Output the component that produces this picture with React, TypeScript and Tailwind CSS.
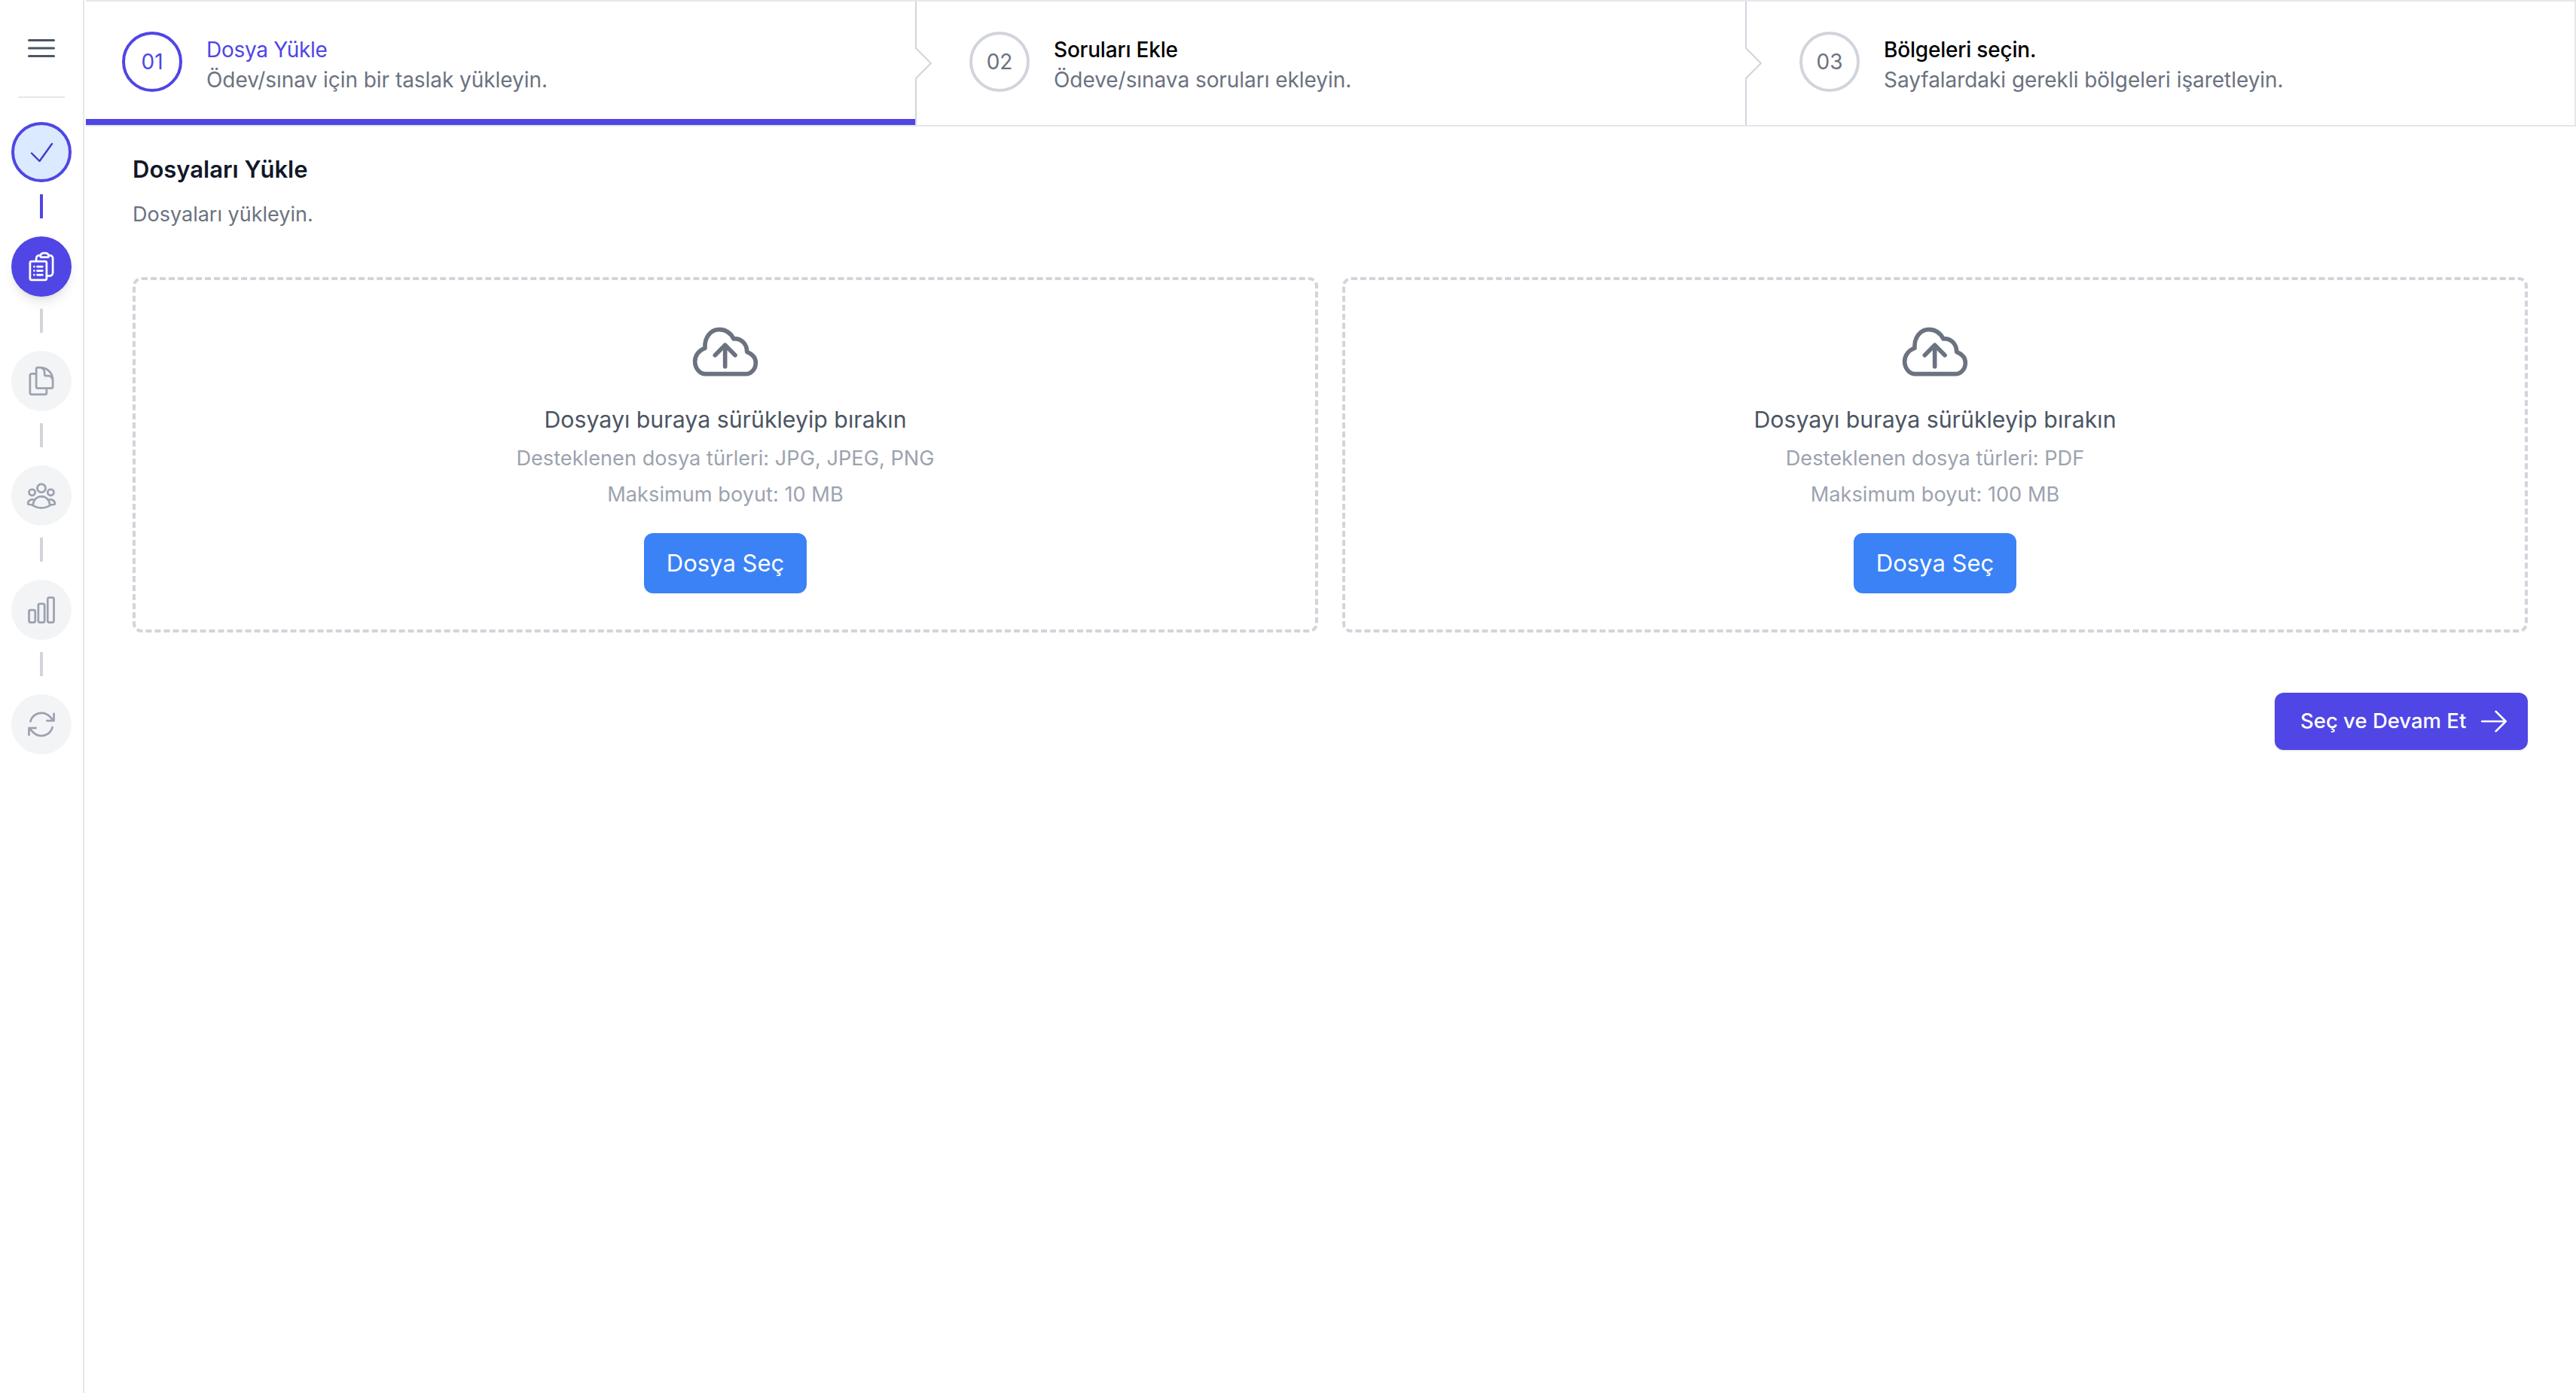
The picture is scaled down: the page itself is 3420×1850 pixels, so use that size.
import type { ComponentType } from "react";
import {
  HiOutlineArrowPath,
  HiOutlineArrowRight,
  HiOutlineBars3,
  HiOutlineChartBar,
  HiOutlineClipboardDocumentList,
  HiOutlineDocumentDuplicate,
  HiOutlineUserGroup,
} from "react-icons/hi2";

const STEPS = [
  { num: "01", title: "Dosya Yükle", desc: "Ödev/sınav için bir taslak yükleyin." },
  { num: "02", title: "Soruları Ekle", desc: "Ödeve/sınava soruları ekleyin." },
  { num: "03", title: "Bölgeleri seçin.", desc: "Sayfalardaki gerekli bölgeleri işaretleyin." },
];

const GREY_ICONS: ComponentType<{ className?: string }>[] = [
  HiOutlineDocumentDuplicate,
  HiOutlineUserGroup,
  HiOutlineChartBar,
  HiOutlineArrowPath,
];

function Sidebar() {
  return (
    <aside className="flex w-[112px] shrink-0 flex-col items-center border-r-2 border-[#E5E7EB]">
      <HiOutlineBars3 className="mt-[40px] h-[48px] w-[48px] text-[#4B5563]" />
      <div className="mt-[40px] h-[2px] w-[62px] bg-[#E5E7EB]" />

      {/* done */}
      <div className="mt-[32px] flex h-[80px] w-[80px] items-center justify-center rounded-full border-4 border-[#4F46E5] bg-[#DBEAFE]">
        <svg width="32" height="26" viewBox="0 0 32 26" fill="none" stroke="#4338CA" strokeWidth="2.4" strokeLinecap="round" strokeLinejoin="round">
          <path d="M3 14.5 13.5 25 30 2" />
        </svg>
      </div>
      <div className="mt-[16px] mb-[24px] h-[32px] w-[4px] bg-[#4F46E5]" />

      {/* current */}
      <div className="flex h-[80px] w-[80px] items-center justify-center rounded-full bg-[#4F46E5] shadow-lg">
        <HiOutlineClipboardDocumentList className="h-[44px] w-[44px] text-white" />
      </div>

      {GREY_ICONS.map((Icon, i) => (
        <div key={i} className="flex flex-col items-center">
          <div className="mt-[16px] mb-[24px] h-[32px] w-[4px] bg-[#D1D5DB]" />
          <div className="flex h-[80px] w-[80px] items-center justify-center rounded-full bg-[#F3F4F6]">
            <Icon className="h-[44px] w-[44px] text-[#9CA3AF]" />
          </div>
        </div>
      ))}
    </aside>
  );
}

function Stepper() {
  return (
    <div className="grid h-[168px] grid-cols-[1102px_1102px_1fr] border-y-2 border-r-2 border-[#E5E7EB]">
      {STEPS.map((step, i) => (
        <div
          key={step.num}
          className={`relative flex items-start gap-[32px] pt-[40px] ${i === 0 ? "border-b-8 border-[#4F46E5] pl-[48px]" : "pl-[71px]"}`}
        >
          {i > 0 && (
            <svg className="absolute top-0 left-[-1px]" width="24" height="164" viewBox="0 0 24 164" fill="none" stroke="#D1D5DB" strokeWidth="2">
              <path d="M1 0V62L21 82 1 102V164" />
            </svg>
          )}
          <div
            className={`flex h-[80px] w-[80px] shrink-0 items-center justify-center rounded-full border-4 text-[28px] ${
              i === 0 ? "border-[#4F46E5] text-[#4F46E5]" : "border-[#D1D5DB] text-[#6B7280]"
            }`}
          >
            {step.num}
          </div>
          <div className="pt-[4px]">
            <div className={`text-[28px] leading-[40px] ${i === 0 ? "font-normal tracking-[-0.3px] text-[#4F46E5]" : "font-medium tracking-[-0.2px] text-black"}`}>
              {step.title}
            </div>
            <div className="text-[28px] leading-[40px] tracking-[-0.05px] text-[#6B7280]">{step.desc}</div>
          </div>
        </div>
      ))}
    </div>
  );
}

function UploadCard({ types, maxSize }: { types: string; maxSize: string }) {
  return (
    <div className="flex h-[472px] flex-col items-center rounded-[12px] border-4 border-dashed border-[#D1D5DB]">
      <svg className="mt-[53px]" width="106" height="85" viewBox="0 0 318 255" fill="none" stroke="#6B7280" strokeWidth="17" strokeLinecap="round" strokeLinejoin="round">
        <path d="M80 215C55 215 38 190 38 165 38 140 55 120 78 112 75 70 100 38 135 38 160 38 180 52 192 75 222 72 245 95 245 127 265 135 280 150 280 170 280 195 262 215 240 215Z" />
        <path d="M158 185V100M118 140 158 100 198 140" />
      </svg>
      <div className="mt-[23px] text-[30.3px] leading-[48px] text-[#4B5563]">Dosyayı buraya sürükleyip bırakın</div>
      <div className="mt-[4px] text-[27.2px] leading-[48px] text-[#9CA3AF]">Desteklenen dosya türleri: {types}</div>
      <div className="text-[27.2px] leading-[48px] text-[#9CA3AF]">Maksimum boyut: {maxSize}</div>
      <button className="mt-[27px] h-[80px] w-[216px] rounded-[12px] bg-[#3B82F6] text-[31px] text-white">Dosya Seç</button>
    </div>
  );
}

export default function App() {
  return (
    <div className="flex min-h-screen bg-white font-['Inter',sans-serif]">
      <Sidebar />
      <main className="ml-[2px] min-w-0 flex-1">
        <Stepper />
        <div className="pt-[33px] pr-[64px] pl-[62px]">
          <h1 className="text-[31px] leading-[48px] font-semibold text-[#111827]">Dosyaları Yükle</h1>
          <p className="mt-[16px] text-[27px] leading-[40px] text-[#6B7280]">Dosyaları yükleyin.</p>

          <div className="mt-[63px] grid grid-cols-2 gap-[32px]">
            <UploadCard types="JPG, JPEG, PNG" maxSize="10 MB" />
            <UploadCard types="PDF" maxSize="100 MB" />
          </div>

          <div className="mt-[80px] flex justify-end">
            <button className="flex h-[76px] w-[336px] items-center rounded-[12px] bg-[#4F46E5] pl-[34px] text-[27.5px] font-medium text-white shadow-sm">
              Seç ve Devam Et
              <HiOutlineArrowRight className="ml-[16px] h-[42px] w-[42px]" />
            </button>
          </div>
        </div>
      </main>
    </div>
  );
}
